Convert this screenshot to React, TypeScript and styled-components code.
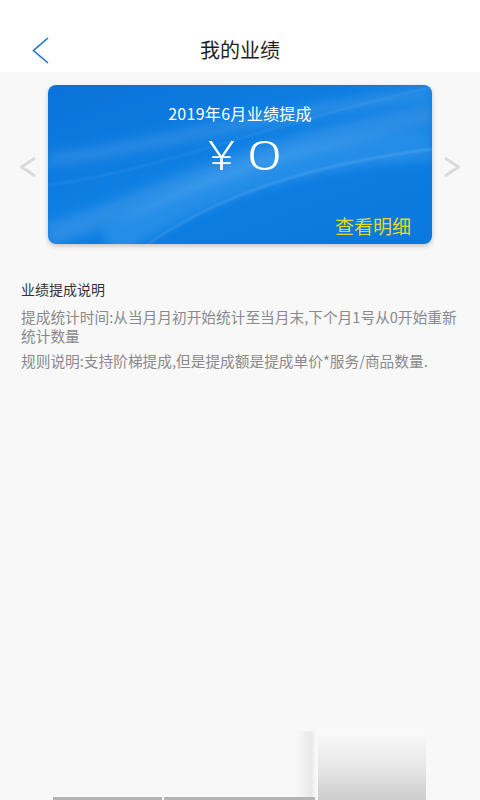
import React from "react";
import styled, { createGlobalStyle } from "styled-components";

const Global = createGlobalStyle`
  html, body { margin: 0; padding: 0; }
  body {
    background: #f8f8f8;
    font-family: "Noto Sans CJK SC", "Noto Sans", sans-serif;
    width: 480px;
    height: 800px;
    overflow: hidden;
  }
`;

const Page = styled.div`
  position: relative;
  width: 480px;
  height: 800px;
  background: #f8f8f8;
  display: flex;
  flex-direction: column;
  overflow: hidden;
`;

const Header = styled.header`
  height: 72px;
  box-sizing: border-box;
  padding-top: 28px;
  background: #ffffff;
  display: grid;
  grid-template-columns: 80px 1fr 80px;
  align-items: center;
`;

const BackButton = styled.div`
  height: 44px;
  display: flex;
  align-items: center;
  padding-left: 32px;
`;

const Title = styled.h1`
  margin: 0;
  text-align: center;
  font-size: 20px;
  font-weight: 400;
  color: #1e1e1e;
  line-height: 44px;
`;

const Carousel = styled.div`
  margin-top: 13px;
  display: grid;
  grid-template-columns: 48px 1fr 48px;
  align-items: center;
`;

const SideArrow = styled.div<{ $side: "left" | "right" }>`
  display: flex;
  justify-content: ${(p) => (p.$side === "left" ? "flex-end" : "flex-start")};
  align-items: center;
  box-sizing: border-box;
  padding: 5px 12px 0;
  height: 159px;
`;

const Card = styled.div`
  position: relative;
  height: 159px;
  border-radius: 8px;
  overflow: hidden;
  background: linear-gradient(160deg, #0a72da 0%, #0e7fe3 45%, #0a78de 100%);
  box-shadow: 0 2px 5px rgba(0, 0, 0, 0.22);
  display: flex;
  flex-direction: column;
  align-items: center;
  color: #ffffff;
`;

const Waves = styled.svg`
  position: absolute;
  inset: 0;
  width: 100%;
  height: 100%;
`;

const CardTitle = styled.div`
  position: relative;
  margin-top: 16px;
  font-size: 16px;
  line-height: 24px;
  letter-spacing: 0.3px;
`;

const Amount = styled.div`
  position: relative;
  margin-top: 7px;
  padding-left: 10px;
  display: flex;
  align-items: center;
  gap: 12px;
  font-family: "Noto Sans", "Noto Sans CJK SC", sans-serif;
  font-size: 40px;
  font-weight: 350;
  line-height: 46px;
`;

const Glyph = styled.span<{ $scale: number; $pad: number }>`
  display: inline-block;
  transform: scaleX(${(p) => p.$scale});
  margin: 0 ${(p) => p.$pad}px;
`;

const DetailLink = styled.div`
  position: relative;
  align-self: flex-end;
  margin-top: 35px;
  margin-right: 21px;
  font-size: 19px;
  line-height: 26px;
  color: #e6d630;
`;

const Section = styled.section`
  padding: 35px 20px 0 21px;
  display: flex;
  flex-direction: column;
  gap: 7px;
`;

const SectionTitle = styled.div`
  font-size: 14px;
  line-height: 20px;
  color: #333333;
  margin-bottom: 2px;
`;

const Para = styled.p`
  margin: 0;
  font-size: 14.7px;
  line-height: 18.5px;
  color: #8a8a8a;
`;

const BottomShade = styled.div`
  position: absolute;
  left: 318px;
  top: 731px;
  width: 108px;
  height: 69px;
  background: linear-gradient(180deg, #fafafa 0%, #e8e8e8 50%, #cdcdcd 100%);
`;

const SideShade = styled.div`
  position: absolute;
  left: 296px;
  top: 731px;
  width: 19px;
  height: 69px;
  background: linear-gradient(90deg, rgba(240,240,240,0) 0%, #e9e9e9 80%, #f5f5f5 100%);
`;

const BottomBar = styled.div<{ $left: number; $width: number }>`
  position: absolute;
  left: ${(p) => p.$left}px;
  width: ${(p) => p.$width}px;
  bottom: 0;
  height: 3px;
  background: #b4b4b4;
`;

const Chevron = ({ dir, color, w, h, sw }: { dir: "left" | "right"; color: string; w: number; h: number; sw: number }) => (
  <svg width={w} height={h} viewBox={`0 0 ${w} ${h}`} fill="none">
    {dir === "left" ? (
      <polyline points={`${w - 1},1 1.5,${h / 2} ${w - 1},${h - 1}`} stroke={color} strokeWidth={sw} />
    ) : (
      <polyline points={`1,1 ${w - 1.5},${h / 2} 1,${h - 1}`} stroke={color} strokeWidth={sw} />
    )}
  </svg>
);

export default function App() {
  return (
    <Page>
      <Global />
      <Header>
        <BackButton>
          <Chevron dir="left" color="#1a6fd2" w={17} h={27} sw={1.6} />
        </BackButton>
        <Title>我的业绩</Title>
        <div />
      </Header>

      <Carousel>
        <SideArrow $side="left">
          <Chevron dir="left" color="#dadada" w={16} h={20} sw={2.8} />
        </SideArrow>
        <Card>
          <Waves viewBox="0 0 384 159" preserveAspectRatio="none">
            <defs>
              <filter id="blur1" x="-20%" y="-20%" width="140%" height="140%">
                <feGaussianBlur stdDeviation="5" />
              </filter>
              <filter id="blur2" x="-20%" y="-20%" width="140%" height="140%">
                <feGaussianBlur stdDeviation="1" />
              </filter>
            </defs>
            <path d="M0 150 C 90 125, 170 70, 384 30" stroke="rgba(255,255,255,0.12)" strokeWidth="22" fill="none" filter="url(#blur1)" />
            <path d="M60 159 C 140 110, 230 70, 384 60" stroke="rgba(120,200,255,0.22)" strokeWidth="30" fill="none" filter="url(#blur1)" />
            <path d="M0 75 C 90 65, 180 35, 384 8" stroke="rgba(255,255,255,0.1)" strokeWidth="14" fill="none" filter="url(#blur1)" />
            <path d="M100 159 C 170 112, 250 82, 384 64" stroke="rgba(255,255,255,0.3)" strokeWidth="1" fill="none" filter="url(#blur2)" />
            <path d="M0 100 C 100 88, 200 45, 384 2" stroke="rgba(255,255,255,0.15)" strokeWidth="1" fill="none" filter="url(#blur2)" />
          </Waves>
          <CardTitle>2019年6月业绩提成</CardTitle>
          <Amount>
            <Glyph $scale={1.2} $pad={2}>¥</Glyph>
            <Glyph $scale={1.55} $pad={6}>0</Glyph>
          </Amount>
          <DetailLink>查看明细</DetailLink>
        </Card>
        <SideArrow $side="right">
          <Chevron dir="right" color="#dadada" w={16} h={20} sw={2.8} />
        </SideArrow>
      </Carousel>

      <Section>
        <SectionTitle>业绩提成说明</SectionTitle>
        <Para>提成统计时间:从当月月初开始统计至当月末,下个月1号从0开始重新统计数量</Para>
        <Para>规则说明:支持阶梯提成,但是提成额是提成单价*服务/商品数量.</Para>
      </Section>

      <SideShade />
      <BottomShade />
      <BottomBar $left={53} $width={109} />
      <BottomBar $left={164} $width={151} />
    </Page>
  );
}
